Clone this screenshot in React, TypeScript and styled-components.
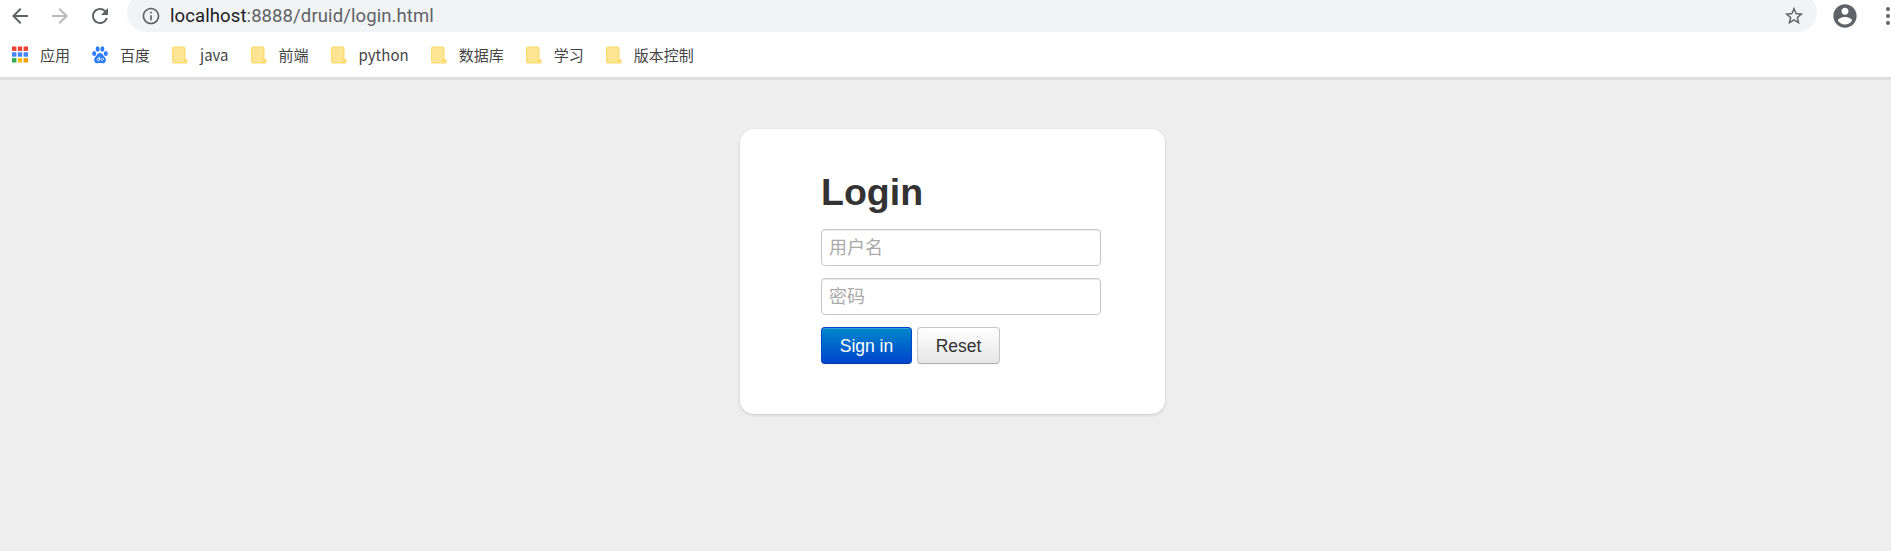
import React from "react";
import styled, { createGlobalStyle } from "styled-components";

const Global = createGlobalStyle`
  html, body { margin: 0; padding: 0; background: #eeeeee; }
  body { font-family: "Liberation Sans", "Noto Sans CJK SC", sans-serif; }
`;

const Shell = styled.div`
  width: 1891px;
  height: 551px;
  overflow: hidden;
  display: flex;
  flex-direction: column;
`;

const Toolbar = styled.div`
  height: 32px;
  background: #fff;
  display: flex;
  align-items: flex-end;
  overflow: hidden;
  flex: none;
`;

const NavGroup = styled.div`
  width: 127px;
  height: 32px;
  padding-left: 8px;
  box-sizing: border-box;
  display: flex;
  align-items: center;
  gap: 16px;
  flex: none;
`;

const NavIcon = styled.svg<{ $muted?: boolean }>`
  width: 24px;
  height: 24px;
  fill: ${(p) => (p.$muted ? "#b9babb" : "#5f6368")};
  flex: none;
`;

const UrlBar = styled.div`
  width: 1690px;
  height: 38px;
  border-radius: 19px;
  background: #f1f3f4;
  display: flex;
  align-items: center;
  padding: 6px 12px 0 14px;
  box-sizing: border-box;
  flex: none;
`;

const InfoIcon = styled.svg`
  width: 20px;
  height: 20px;
  fill: #5f6368;
  flex: none;
`;

const UrlText = styled.div`
  margin-left: 9px;
  font: 400 18.5px/24px Roboto, "Liberation Sans", sans-serif;
  letter-spacing: 0.1px;
  color: #5f6368;
  flex: 1;
`;

const UrlHost = styled.span`
  color: #202124;
`;

const StarIcon = styled.svg`
  width: 22px;
  height: 22px;
  fill: #5f6368;
  flex: none;
`;

const RightIcons = styled.div`
  height: 32px;
  display: flex;
  align-items: center;
  padding-left: 14px;
  gap: 26px;
  flex: none;
`;

const AccountIcon = styled.svg`
  width: 28px;
  height: 28px;
  fill: #5f6368;
  flex: none;
`;

const DotsIcon = styled.svg`
  width: 6px;
  height: 20px;
  fill: #5f6368;
  flex: none;
`;

const BookmarkBar = styled.div`
  height: 45px;
  background: #fff;
  border-bottom: 3px solid #dfdfe1;
  display: flex;
  align-items: center;
  padding-left: 12px;
  gap: 22px;
  flex: none;
`;

const Bookmark = styled.div`
  display: flex;
  align-items: center;
  gap: 12px;
`;

const BookmarkLabel = styled.span`
  font: 400 15px/20px "Noto Sans CJK SC", "Noto Sans", sans-serif;
  color: #444;
  white-space: nowrap;
`;

const BookmarkIcon = styled.svg`
  width: 16px;
  height: 18px;
  flex: none;
`;

const Page = styled.main`
  flex: 1;
  background: #eeeeee;
  padding: 49px 0 0 740px;
`;

const Card = styled.form`
  width: 425px;
  height: 285px;
  box-sizing: border-box;
  background: #fff;
  border-radius: 14px;
  box-shadow: 0 1px 3px rgba(0, 0, 0, 0.16);
  padding: 37px 0 0 81px;
  display: flex;
  flex-direction: column;
`;

const Title = styled.h2`
  margin: 0 0 10px;
  font: 700 37.5px/53px "Liberation Sans", Arial, sans-serif;
  color: #333;
`;

const Field = styled.div`
  width: 280px;
  height: 37px;
  margin-bottom: 12px;
  box-sizing: border-box;
  border: 1px solid #c8c8c8;
  border-radius: 4px;
  box-shadow: inset 0 1px 1px rgba(0, 0, 0, 0.075);
  background: #fff;
  padding: 0 7px;
  font: 400 18px/32px "Noto Sans CJK SC", sans-serif;
  color: #aaa;
`;

const Buttons = styled.div`
  display: flex;
  gap: 5px;
`;

const Button = styled.button<{ $primary?: boolean }>`
  height: 37px;
  width: ${(p) => (p.$primary ? "91px" : "83px")};
  padding: 0;
  border-radius: 4px;
  font: 400 17.5px/20px "Liberation Sans", Arial, sans-serif;
  color: ${(p) => (p.$primary ? "#fff" : "#333")};
  border: 1px solid ${(p) => (p.$primary ? "#0044cc" : "#c6c6c6")};
  border-bottom-color: ${(p) => (p.$primary ? "#0037a8" : "#b0b0b0")};
  background: ${(p) =>
    p.$primary
      ? "linear-gradient(to bottom, #0088cc, #0044cc)"
      : "linear-gradient(to bottom, #ffffff, #e6e6e6)"};
  box-shadow: inset 0 1px 0 rgba(255, 255, 255, 0.2), 0 1px 2px rgba(0, 0, 0, 0.05);
`;

const AppsGrid = () => {
  const c = ["#ea4335", "#ea4335", "#ea4335", "#4285f4", "#4285f4", "#4285f4", "#34a853", "#fbbc05", "#f59e0b"];
  return (
    <BookmarkIcon viewBox="0 0 16 18">
      {c.map((fill, i) => (
        <rect key={i} x={(i % 3) * 5.8} y={Math.floor(i / 3) * 5.8 + 0.5} width="4.4" height="4.4" fill={fill} />
      ))}
    </BookmarkIcon>
  );
};

const BaiduPaw = () => (
  <BookmarkIcon viewBox="0 0 16 18">
    <g fill="#2b7cf6">
      <ellipse cx="2.200" cy="7.500" rx="2" ry="2.500" />
      <ellipse cx="5.600" cy="3" rx="2" ry="2.700" />
      <ellipse cx="10.400" cy="3" rx="2" ry="2.700" />
      <ellipse cx="13.800" cy="7.500" rx="2" ry="2.500" />
      <path d="M8 7c-2 0-2.700 1.800-4 3.200C2.600 11.700 1.900 13 2.200 14.700 2.600 16.700 4.200 17.500 5.600 17.300 6.500 17.200 7.200 17 8 17s1.500.2 2.400.3c1.400.2 3-.6 3.400-2.600.3-1.700-.4-3-1.800-4.500-1.300-1.400-2-3.200-4-3.200z" />
    </g>
    <path d="M7.400 10.800v3.400M7.400 12.500a1.300 1.300 0 1 0 0 1.900M9 12v1.500c0 1.100 2.300 1.100 2.300 0V12" fill="none" stroke="#fff" strokeWidth="0.900" />
  </BookmarkIcon>
);

const Folder = () => (
  <BookmarkIcon viewBox="0 0 16 18">
    <path d="M2 .5h9.500a2 2 0 0 1 2 2V13h1a1 1 0 0 1 1 1v2.500a1 1 0 0 1-1 1H2a2 2 0 0 1-2-2V2.500a2 2 0 0 1 2-2z" fill="#fadc73" />
    <path d="M2.500 1.800h8.500a1.200 1.200 0 0 1 1.200 1.200v10a1.200 1.200 0 0 0-1.200 1.200v2H2.500a1.200 1.200 0 0 1-1.200-1.200V3a1.200 1.200 0 0 1 1.200-1.200z" fill="#fee594" />
  </BookmarkIcon>
);

const folders = ["java", "前端", "python", "数据库", "学习", "版本控制"];

export default function App() {
  return (
    <Shell>
      <Global />
      <Toolbar>
        <NavGroup>
          <NavIcon viewBox="0 0 24 24">
            <path d="M20 11H7.830l5.590-5.590L12 4l-8 8 8 8 1.410-1.410L7.830 13H20v-2z" />
          </NavIcon>
          <NavIcon viewBox="0 0 24 24" $muted>
            <path d="M12 4l-1.410 1.410L16.170 11H4v2h12.170l-5.580 5.590L12 20l8-8z" />
          </NavIcon>
          <NavIcon viewBox="0 0 24 24">
            <path d="M17.650 6.350A7.958 7.958 0 0 0 12 4c-4.420 0-7.990 3.580-7.990 8s3.570 8 7.990 8c3.730 0 6.840-2.550 7.730-6h-2.080A5.990 5.990 0 0 1 12 18c-3.310 0-6-2.690-6-6s2.690-6 6-6c1.660 0 3.140.69 4.220 1.780L13 11h7V4l-2.350 2.350z" />
          </NavIcon>
        </NavGroup>
        <UrlBar>
          <InfoIcon viewBox="0 0 24 24">
            <path d="M11 7h2v2h-2zm0 4h2v6h-2zm1-9C6.480 2 2 6.480 2 12s4.480 10 10 10 10-4.480 10-10S17.520 2 12 2zm0 18c-4.410 0-8-3.590-8-8s3.590-8 8-8 8 3.590 8 8-3.590 8-8 8z" />
          </InfoIcon>
          <UrlText>
            <UrlHost>localhost</UrlHost>:8888/druid/login.html
          </UrlText>
          <StarIcon viewBox="0 0 24 24">
            <path d="M22 9.240l-7.190-.620L12 2 9.190 8.630 2 9.240l5.460 4.730L5.820 21 12 17.270 18.180 21l-1.630-7.030L22 9.240zM12 15.400l-3.760 2.270 1-4.280-3.320-2.880 4.380-.380L12 6.100l1.710 4.040 4.380.380-3.320 2.880 1 4.280L12 15.400z" />
          </StarIcon>
        </UrlBar>
        <RightIcons>
          <AccountIcon viewBox="0 0 24 24">
            <path d="M12 2C6.480 2 2 6.480 2 12s4.480 10 10 10 10-4.480 10-10S17.520 2 12 2zm0 3c1.660 0 3 1.340 3 3s-1.340 3-3 3-3-1.340-3-3 1.340-3 3-3zm0 14.200c-2.500 0-4.710-1.280-6-3.220.030-1.990 4-3.080 6-3.080 1.990 0 5.970 1.090 6 3.080-1.290 1.940-3.500 3.220-6 3.220z" />
          </AccountIcon>
          <DotsIcon viewBox="0 0 6 20">
            <circle cx="3" cy="3" r="2" />
            <circle cx="3" cy="10" r="2" />
            <circle cx="3" cy="17" r="2" />
          </DotsIcon>
        </RightIcons>
      </Toolbar>
      <BookmarkBar>
        <Bookmark>
          <AppsGrid />
          <BookmarkLabel>应用</BookmarkLabel>
        </Bookmark>
        <Bookmark>
          <BaiduPaw />
          <BookmarkLabel>百度</BookmarkLabel>
        </Bookmark>
        {folders.map((f) => (
          <Bookmark key={f}>
            <Folder />
            <BookmarkLabel>{f}</BookmarkLabel>
          </Bookmark>
        ))}
      </BookmarkBar>
      <Page>
        <Card>
          <Title>Login</Title>
          <Field>用户名</Field>
          <Field>密码</Field>
          <Buttons>
            <Button type="button" $primary>Sign in</Button>
            <Button type="button">Reset</Button>
          </Buttons>
        </Card>
      </Page>
    </Shell>
  );
}
